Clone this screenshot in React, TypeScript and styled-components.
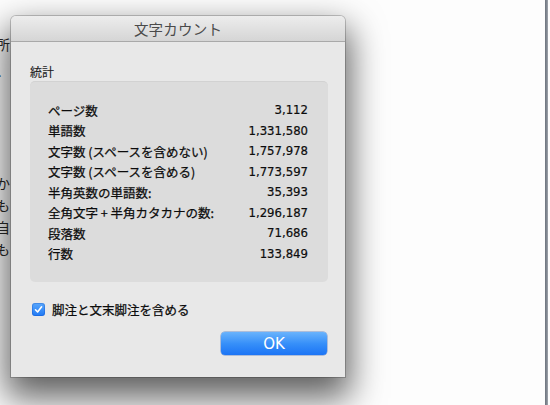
import React from "react";
import styled, { createGlobalStyle } from "styled-components";

const GlobalStyle = createGlobalStyle`
  html, body {
    margin: 0;
    padding: 0;
    background: #ffffff;
  }
  body {
    font-family: "Noto Sans CJK JP", "DejaVu Sans", sans-serif;
    -webkit-font-smoothing: antialiased;
  }
`;

const Desktop = styled.div`
  position: relative;
  width: 550px;
  height: 405px;
  overflow: hidden;
  display: flex;
  background: #fdfdfd;
`;

const DocumentArea = styled.div`
  flex: 1;
  overflow: hidden;
`;

const DocColumn = styled.div`
  width: 20px;
  margin-left: -4px;
  padding-top: 31px;
  font-family: "Noto Sans CJK JP", serif;
  font-size: 14px;
  color: #2a2a2a;
`;

const Paragraph = styled.div<{ $lineHeight: number; $gap?: number }>`
  line-height: ${(p) => p.$lineHeight}px;
  margin-bottom: ${(p) => p.$gap || 0}px;
  white-space: nowrap;
`;

const WindowEdge = styled.div`
  width: 3px;
  margin-right: 2px;
  background: linear-gradient(90deg, #6c737d, #858b94 60%, #a4a9b0);
`;

const Dialog = styled.div`
  position: absolute;
  left: 11px;
  top: 16px;
  width: 334px;
  height: 361px;
  box-sizing: border-box;
  background: #e8e8e8;
  border-radius: 5px 5px 0 0;
  box-shadow: 0 0 0 1px rgba(0, 0, 0, 0.2), 0 16px 34px 5px rgba(0, 0, 0, 0.62);
  display: flex;
  flex-direction: column;
`;

const TitleBar = styled.div`
  height: 25px;
  flex-shrink: 0;
  border-radius: 5px 5px 0 0;
  background: linear-gradient(#ededed, #d5d5d5);
  border-bottom: 1px solid #a9a9a9;
  display: flex;
  align-items: center;
  justify-content: center;
  font-size: 14.5px;
  color: #4a4a4a;
  letter-spacing: 0.2px;
`;

const Body = styled.div`
  flex: 1;
  display: flex;
  flex-direction: column;
  padding: 22px 17px 22px 19px;
`;

const SectionLabel = styled.div`
  font-size: 12px;
  line-height: 16px;
  color: #222;
  margin-bottom: 1px;
  -webkit-text-stroke: 0.15px #222;
`;

const StatsBox = styled.div`
  background: #dcdcdc;
  border-radius: 5px;
  border-top: 1px solid #d2d2d2;
  padding: 18px 20px 18px 18px;
  display: flex;
  flex-direction: column;
`;

const StatRow = styled.div`
  height: 20.5px;
  display: flex;
  align-items: center;
  justify-content: space-between;
`;

const StatLabel = styled.span`
  font-size: 12.5px;
  color: #0c0c0c;
  -webkit-text-stroke: 0.25px #0c0c0c;
`;

const StatValue = styled.span`
  font-family: "DejaVu Sans", sans-serif;
  font-size: 11.7px;
  color: #0c0c0c;
  -webkit-text-stroke: 0.2px #0c0c0c;
`;

const CheckRow = styled.label`
  margin-top: 19px;
  display: flex;
  align-items: center;
  gap: 7px;
  height: 16px;
  padding-left: 2px;
  font-size: 12.5px;
  color: #0c0c0c;
  -webkit-text-stroke: 0.25px #0c0c0c;
`;

const CheckBox = styled.span`
  width: 13px;
  height: 13px;
  border-radius: 3px;
  background: linear-gradient(#5aa8fb, #2079f5);
  box-shadow: inset 0 0 0 1px rgba(0, 60, 180, 0.25);
  display: flex;
  align-items: center;
  justify-content: center;
  -webkit-text-stroke: 0;
`;

const ButtonRow = styled.div`
  margin-top: auto;
  display: flex;
  justify-content: flex-end;
`;

const OkButton = styled.button`
  width: 106px;
  height: 23px;
  border: none;
  border-radius: 4px;
  background: linear-gradient(#6ab3fc, #3790f9 50%, #1b74f5);
  box-shadow: 0 0 0 0.5px rgba(0, 60, 170, 0.5);
  color: #ffffff;
  font-family: "DejaVu Sans", sans-serif;
  font-size: 15px;
  padding: 0;
  margin-right: 1px;
`;

const stats: [string, string][] = [
  ["ページ数", "3,112"],
  ["単語数", "1,331,580"],
  ["文字数 (スペースを含めない)", "1,757,978"],
  ["文字数 (スペースを含める)", "1,773,597"],
  ["半角英数の単語数:", "35,393"],
  ["全角文字 + 半角カタカナの数:", "1,296,187"],
  ["段落数", "71,686"],
  ["行数", "133,849"],
];

export default function App() {
  return (
    <>
      <GlobalStyle />
      <Desktop>
        <DocumentArea>
          <DocColumn>
            <Paragraph $lineHeight={26} $gap={89}>
              <div>所</div>
              <div>、</div>
            </Paragraph>
            <Paragraph $lineHeight={22}>
              <div>か</div>
              <div>も</div>
              <div>自</div>
              <div>も</div>
            </Paragraph>
          </DocColumn>
        </DocumentArea>
        <WindowEdge />
        <Dialog>
          <TitleBar>文字カウント</TitleBar>
          <Body>
            <SectionLabel>統計</SectionLabel>
            <StatsBox>
              {stats.map(([label, value]) => (
                <StatRow key={label}>
                  <StatLabel>{label}</StatLabel>
                  <StatValue>{value}</StatValue>
                </StatRow>
              ))}
            </StatsBox>
            <CheckRow>
              <CheckBox>
                <svg width="9" height="9" viewBox="0 0 9 9">
                  <path d="M1.5 4.8 L3.6 7 L7.6 1.8" fill="none" stroke="#fff" strokeWidth="1.6" strokeLinecap="round" strokeLinejoin="round" />
                </svg>
              </CheckBox>
              脚注と文末脚注を含める
            </CheckRow>
            <ButtonRow>
              <OkButton>OK</OkButton>
            </ButtonRow>
          </Body>
        </Dialog>
      </Desktop>
    </>
  );
}
